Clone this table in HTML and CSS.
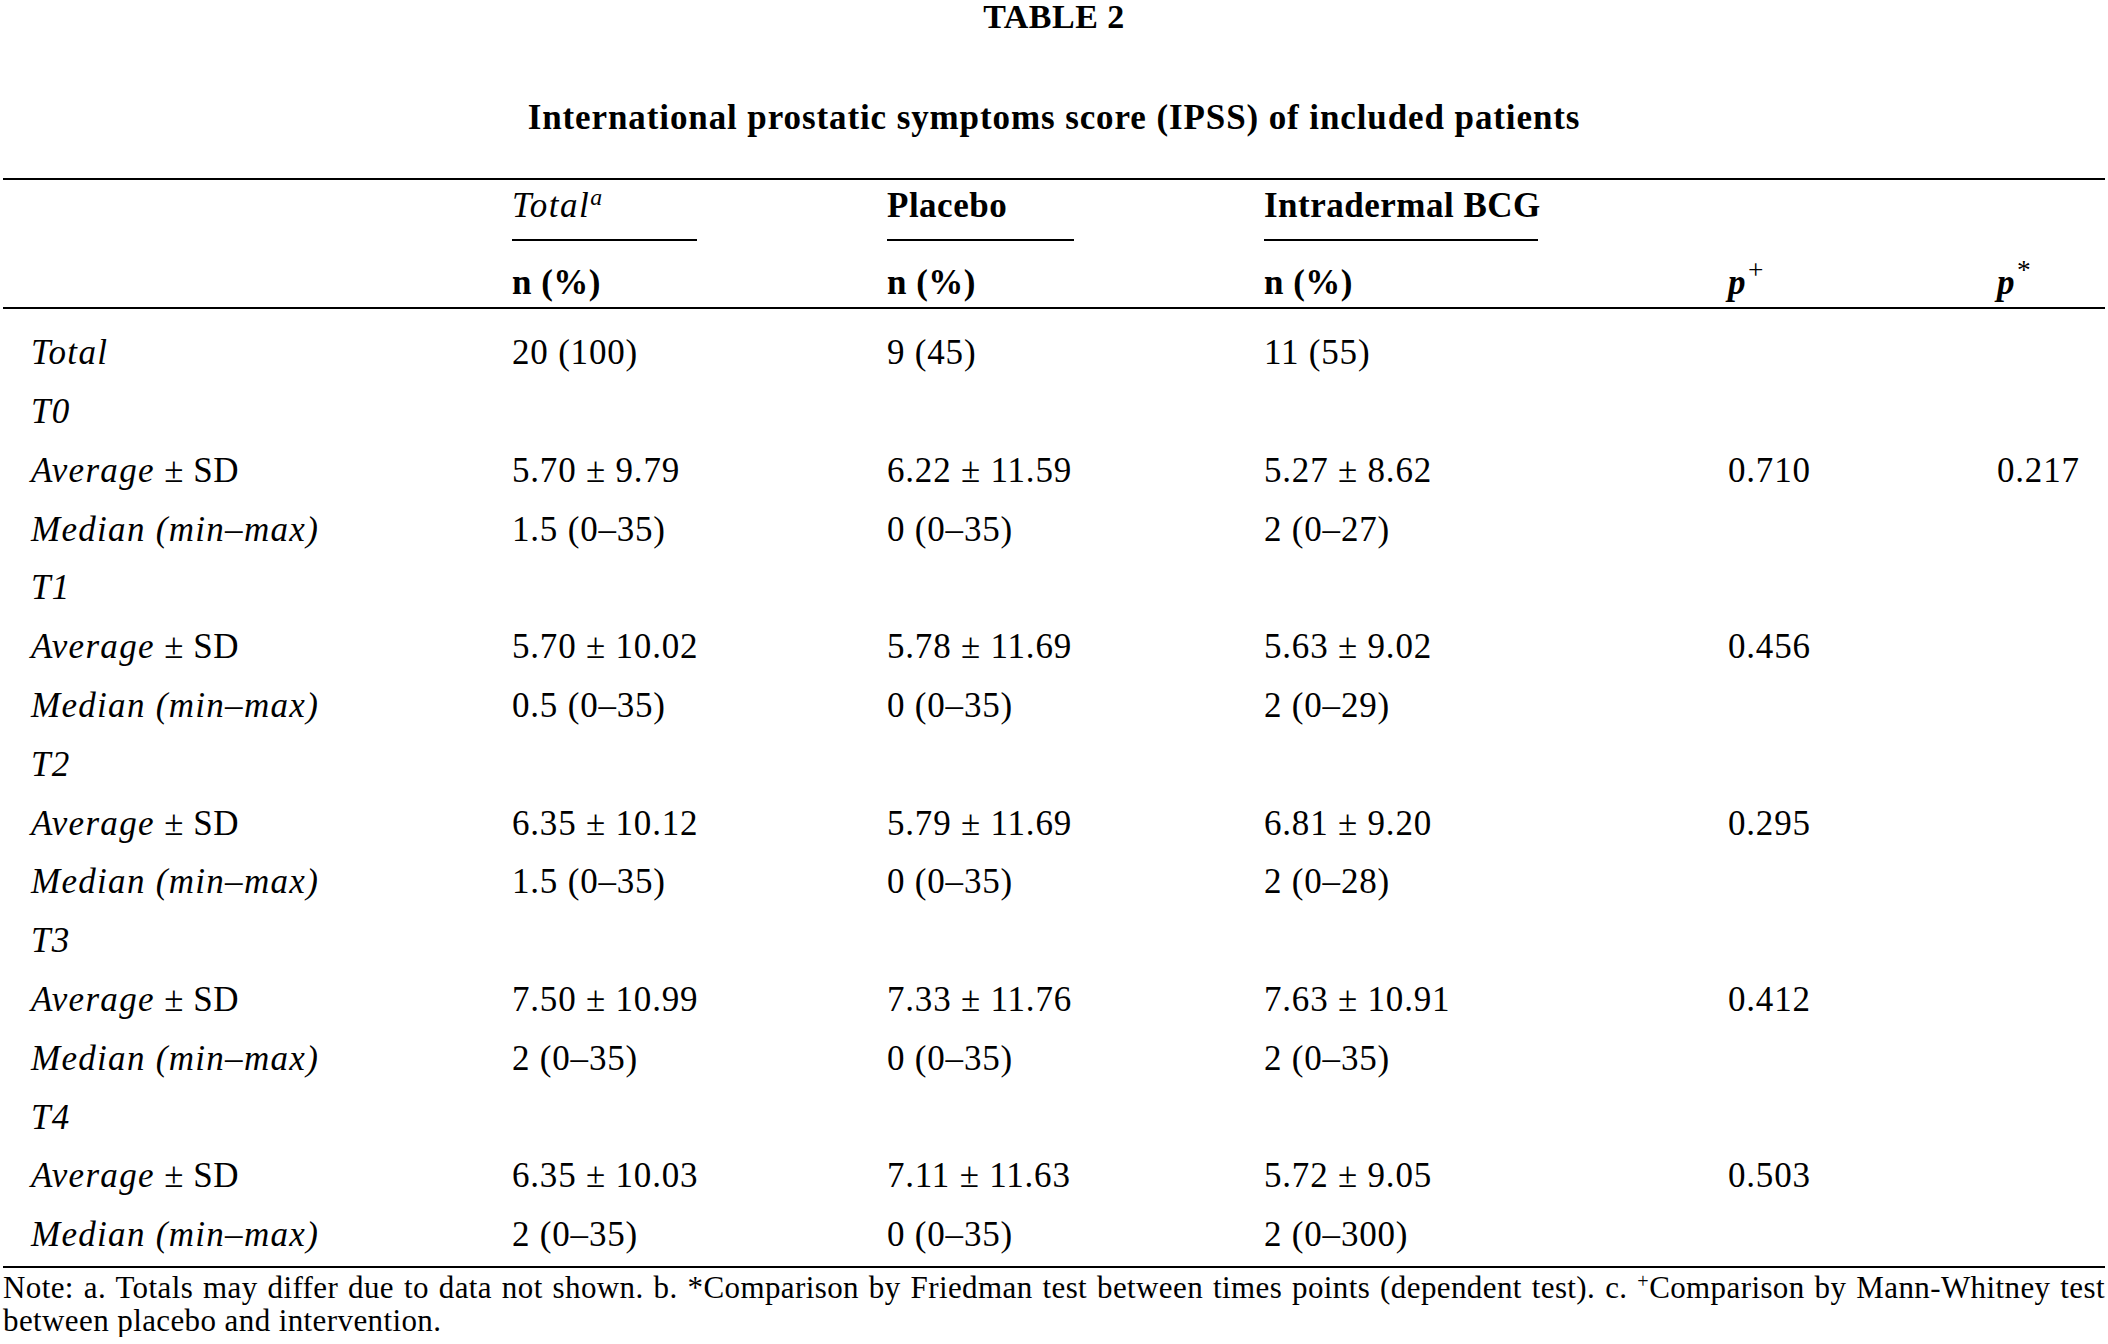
FILE: index.html
```html
<!DOCTYPE html>
<html lang="en">
<head>
<meta charset="utf-8">
<title>Table 2 – IPSS of included patients</title>
<link rel="stylesheet" href="styles.css">
</head>
<body>
<div class="page">
  <h2 class="table-label">TABLE 2</h2>
  <h1 class="table-title">International prostatic symptoms score (IPSS) of included patients</h1>
  <table class="data">
    <colgroup>
      <col class="c-label">
      <col class="c-total">
      <col class="c-placebo">
      <col class="c-bcg">
      <col class="c-p1">
      <col class="c-p2">
    </colgroup>
    <thead>
      <tr class="h1">
        <th class="lab"></th>
        <th><div class="ul"><em class="tot">Total</em><sup class="it">a</sup></div></th>
        <th><div class="ul">Placebo</div></th>
        <th><div class="ul">Intradermal BCG</div></th>
        <th></th>
        <th class="last"></th>
      </tr>
      <tr class="h2">
        <th class="lab"></th>
        <th>n (%)</th>
        <th>n (%)</th>
        <th>n (%)</th>
        <th><em>p</em><sup class="psup">+</sup></th>
        <th class="last"><em>p</em><sup class="psup">*</sup></th>
      </tr>
    </thead>
    <tbody>
      <tr class="first"><td class="lab"><em>Total</em></td><td>20 (100)</td><td>9 (45)</td><td>11 (55)</td><td></td><td class="last"></td></tr>
      <tr><td class="lab"><em>T0</em></td><td></td><td></td><td></td><td></td><td class="last"></td></tr>
      <tr><td class="lab"><em>Average</em> ± SD</td><td>5.70 ± 9.79</td><td>6.22 ± 11.59</td><td>5.27 ± 8.62</td><td>0.710</td><td class="last">0.217</td></tr>
      <tr><td class="lab"><em>Median (min–max)</em></td><td>1.5 (0–35)</td><td>0 (0–35)</td><td>2 (0–27)</td><td></td><td class="last"></td></tr>
      <tr><td class="lab"><em>T1</em></td><td></td><td></td><td></td><td></td><td class="last"></td></tr>
      <tr><td class="lab"><em>Average</em> ± SD</td><td>5.70 ± 10.02</td><td>5.78 ± 11.69</td><td>5.63 ± 9.02</td><td>0.456</td><td class="last"></td></tr>
      <tr><td class="lab"><em>Median (min–max)</em></td><td>0.5 (0–35)</td><td>0 (0–35)</td><td>2 (0–29)</td><td></td><td class="last"></td></tr>
      <tr><td class="lab"><em>T2</em></td><td></td><td></td><td></td><td></td><td class="last"></td></tr>
      <tr><td class="lab"><em>Average</em> ± SD</td><td>6.35 ± 10.12</td><td>5.79 ± 11.69</td><td>6.81 ± 9.20</td><td>0.295</td><td class="last"></td></tr>
      <tr><td class="lab"><em>Median (min–max)</em></td><td>1.5 (0–35)</td><td>0 (0–35)</td><td>2 (0–28)</td><td></td><td class="last"></td></tr>
      <tr><td class="lab"><em>T3</em></td><td></td><td></td><td></td><td></td><td class="last"></td></tr>
      <tr><td class="lab"><em>Average</em> ± SD</td><td>7.50 ± 10.99</td><td>7.33 ± 11.76</td><td>7.63 ± 10.91</td><td>0.412</td><td class="last"></td></tr>
      <tr><td class="lab"><em>Median (min–max)</em></td><td>2 (0–35)</td><td>0 (0–35)</td><td>2 (0–35)</td><td></td><td class="last"></td></tr>
      <tr><td class="lab"><em>T4</em></td><td></td><td></td><td></td><td></td><td class="last"></td></tr>
      <tr><td class="lab"><em>Average</em> ± SD</td><td>6.35 ± 10.03</td><td>7.11 ± 11.63</td><td>5.72 ± 9.05</td><td>0.503</td><td class="last"></td></tr>
      <tr class="final"><td class="lab"><em>Median (min–max)</em></td><td>2 (0–35)</td><td>0 (0–35)</td><td>2 (0–300)</td><td></td><td class="last"></td></tr>
    </tbody>
  </table>
  <p class="note"><span class="note-line1">Note: a. Totals may differ due to data not shown. b. *Comparison by Friedman test between times points (dependent test). c. <sup>+</sup>Comparison by Mann-Whitney test</span><span class="note-line2">between placebo and intervention.</span></p>
</div>
</body>
</html>
```
FILE: styles.css
```css
html, body {
  margin: 0;
  padding: 0;
  background: #ffffff;
}

body {
  font-family: "Liberation Serif", "Times New Roman", serif;
  color: #000000;
}

.page {
  width: 2102px;
  padding: 0 3px;
}

.table-label {
  margin: 0;
  font-size: 34px;
  line-height: 34px;
  font-weight: bold;
  letter-spacing: 0.5px;
  text-align: center;
}

.table-title {
  margin: 64px 0 0 0;
  font-size: 35px;
  line-height: 40px;
  font-weight: bold;
  letter-spacing: 0.9px;
  text-align: center;
}

.data {
  margin-top: 40px;
  width: 2102px;
  table-layout: fixed;
  border-collapse: separate;
  border-spacing: 0;
  font-size: 35px;
  line-height: 40px;
}

.c-label { width: 509px; }
.c-total { width: 375px; }
.c-placebo { width: 377px; }
.c-bcg { width: 464px; }
.c-p1 { width: 269px; }
.c-p2 { width: 108px; }

.data th,
.data td {
  text-align: left;
  white-space: nowrap;
  padding: 0 190px 0 0;
  vertical-align: baseline;
}

.data td {
  letter-spacing: 0.8px;
}

.data th {
  font-weight: bold;
  letter-spacing: 0.5px;
}

.data .lab {
  padding-left: 28px;
  letter-spacing: 0.6px;
}

.data .lab em {
  letter-spacing: 1.3px;
}

.data .last { padding-right: 29px; }

.data em { font-style: italic; }

.h1 th {
  border-top: 2px solid #000;
  padding-top: 6px;
  vertical-align: top;
}

.ul {
  padding-bottom: 12.5px;
  border-bottom: 2px solid #000;
  font-weight: bold;
}

.ul .tot {
  font-weight: normal;
  letter-spacing: 1.5px;
}

.h1 sup.it {
  font-style: italic;
  font-weight: normal;
  font-size: 0.68em;
  vertical-align: 0.5em;
}

.h2 th {
  padding-top: 22px;
  padding-bottom: 4px;
  border-bottom: 2px solid #000;
}

.h2 th em {
  font-weight: bold;
}

sup {
  font-size: 0.62em;
  line-height: 0;
  vertical-align: 0.62em;
  font-weight: normal;
}

.h2 sup.psup {
  font-size: 0.78em;
  vertical-align: 0.55em;
  margin-left: 2px;
}

.data tbody td {
  padding-top: 9.4px;
  padding-bottom: 9.4px;
}

.data tbody tr.first td { padding-top: 24.85px; }

.data tbody tr.final td {
  padding-bottom: 11px;
  border-bottom: 2px solid #000;
}

.note {
  margin: 3px 0 0 0;
  font-size: 31px;
  line-height: 33px;
  letter-spacing: 0.4px;
}

.note-line1 {
  display: block;
  text-align: justify;
  text-align-last: justify;
}

.note-line2 {
  display: block;
}

.note sup {
  font-size: 0.65em;
  vertical-align: 0.5em;
}
```
